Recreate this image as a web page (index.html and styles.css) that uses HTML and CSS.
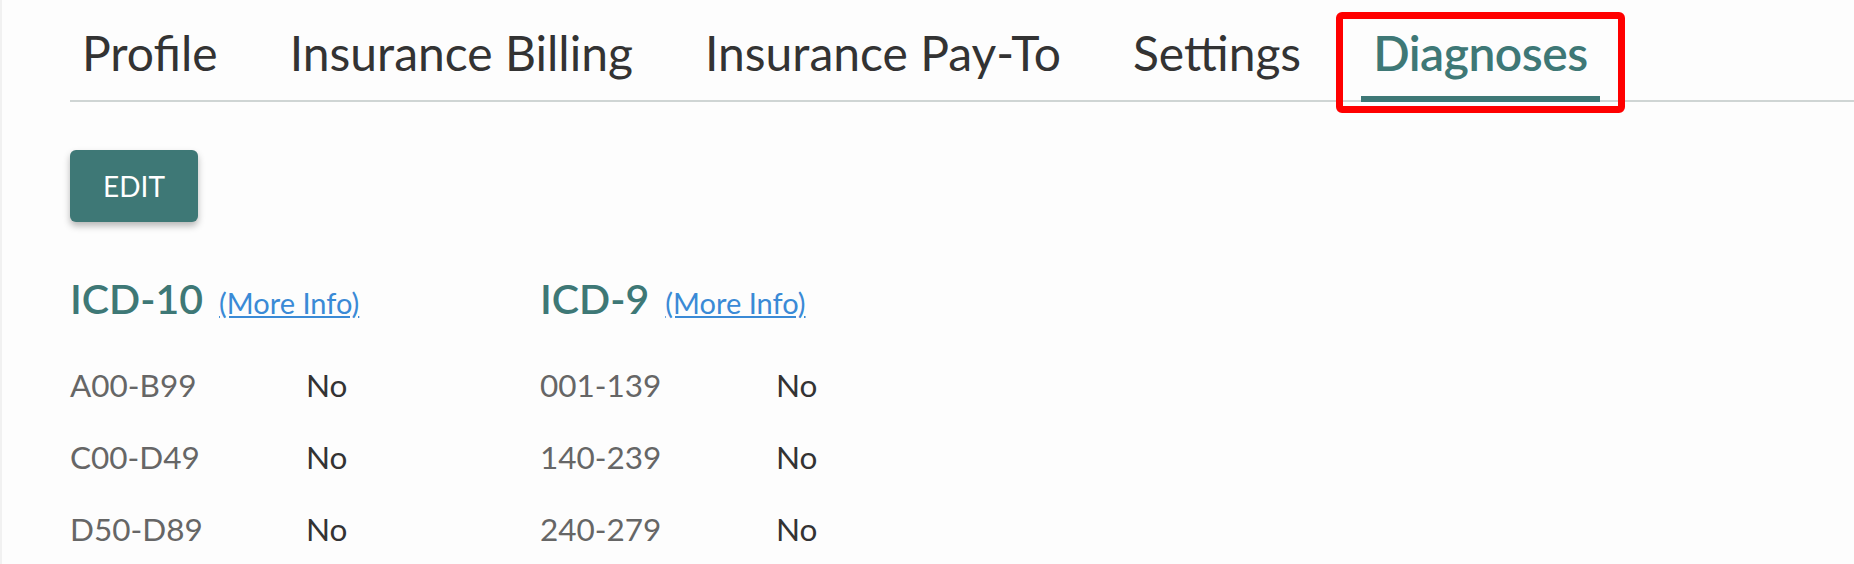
FILE: index.html
```html
<!DOCTYPE html>
<html lang="en">
<head>
<meta charset="utf-8">
<title>Diagnoses</title>
<link rel="stylesheet" href="styles.css">
</head>
<body>
<div class="page">
  <nav class="tabs">
    <a class="tab">Profile</a>
    <a class="tab">Insurance Billing</a>
    <a class="tab">Insurance Pay-To</a>
    <a class="tab">Settings</a>
    <a class="tab tab-active">Diagnoses<span class="highlight"></span></a>
  </nav>
  <main class="content">
    <button class="btn-edit">EDIT</button>
    <div class="columns">
      <section class="code-col">
        <div class="code-head">
          <h2 class="code-title">ICD-10</h2>
          <a class="more-info" href="#">(More Info)</a>
        </div>
        <div class="code-row"><span class="code-label">A00-B99</span><span class="code-value">No</span></div>
        <div class="code-row"><span class="code-label">C00-D49</span><span class="code-value">No</span></div>
        <div class="code-row"><span class="code-label">D50-D89</span><span class="code-value">No</span></div>
      </section>
      <section class="code-col">
        <div class="code-head">
          <h2 class="code-title">ICD-9</h2>
          <a class="more-info" href="#">(More Info)</a>
        </div>
        <div class="code-row"><span class="code-label">001-139</span><span class="code-value">No</span></div>
        <div class="code-row"><span class="code-label">140-239</span><span class="code-value">No</span></div>
        <div class="code-row"><span class="code-label">240-279</span><span class="code-value">No</span></div>
      </section>
    </div>
  </main>
</div>
</body>
</html>
```

FILE: styles.css
```css
html, body {
  margin: 0;
  padding: 0;
  background: #fdfdfd;
  font-family: Lato, "Open Sans", "Liberation Sans", sans-serif;
  overflow: hidden;
}

.page {
  height: 564px;
  border-left: 2px solid #f1f1f1;
  box-sizing: border-box;
  padding-left: 68px;
}

.tabs {
  display: flex;
  gap: 48px;
  padding-top: 24px;
  border-bottom: 2px solid #cfd5d4;
}

.tab {
  position: relative;
  display: block;
  padding: 0 12px 14px;
  margin-bottom: -2px;
  font-size: 48px;
  line-height: 57.6px;
  color: #333333;
  border-bottom: 6px solid transparent;
  white-space: nowrap;
}

.tab-active {
  color: #3e7876;
  font-weight: 600;
  letter-spacing: -0.5px;
  border-bottom-color: #3e7876;
}

.highlight {
  position: absolute;
  top: -12px;
  left: -25px;
  right: -25px;
  bottom: -17px;
  border: 7px solid #ff0000;
  border-radius: 6px;
}

.content {
  padding-top: 48px;
}

.btn-edit {
  display: block;
  width: 128px;
  height: 72px;
  border: none;
  border-radius: 6px;
  background: #3e7876;
  color: #ffffff;
  font-family: Lato, "Open Sans", sans-serif;
  font-size: 28px;
  padding: 0;
  box-shadow: 0 4px 7px rgba(0, 0, 0, 0.28);
}

.columns {
  display: flex;
  margin-top: 52px;
}

.code-col {
  width: 470px;
}

.code-head {
  display: flex;
  align-items: baseline;
  gap: 16px;
  margin-bottom: 25px;
}

.code-title {
  margin: 0;
  font-size: 41px;
  line-height: 50.4px;
  font-weight: 600;
  color: #3e7876;
}

.more-info {
  font-size: 29px;
  color: #3a8ad6;
  text-decoration: underline;
}

.code-row {
  display: flex;
  font-size: 31.5px;
  line-height: 72px;
}

.code-label {
  width: 236px;
  color: #666666;
}

.code-value {
  color: #333333;
}
```
